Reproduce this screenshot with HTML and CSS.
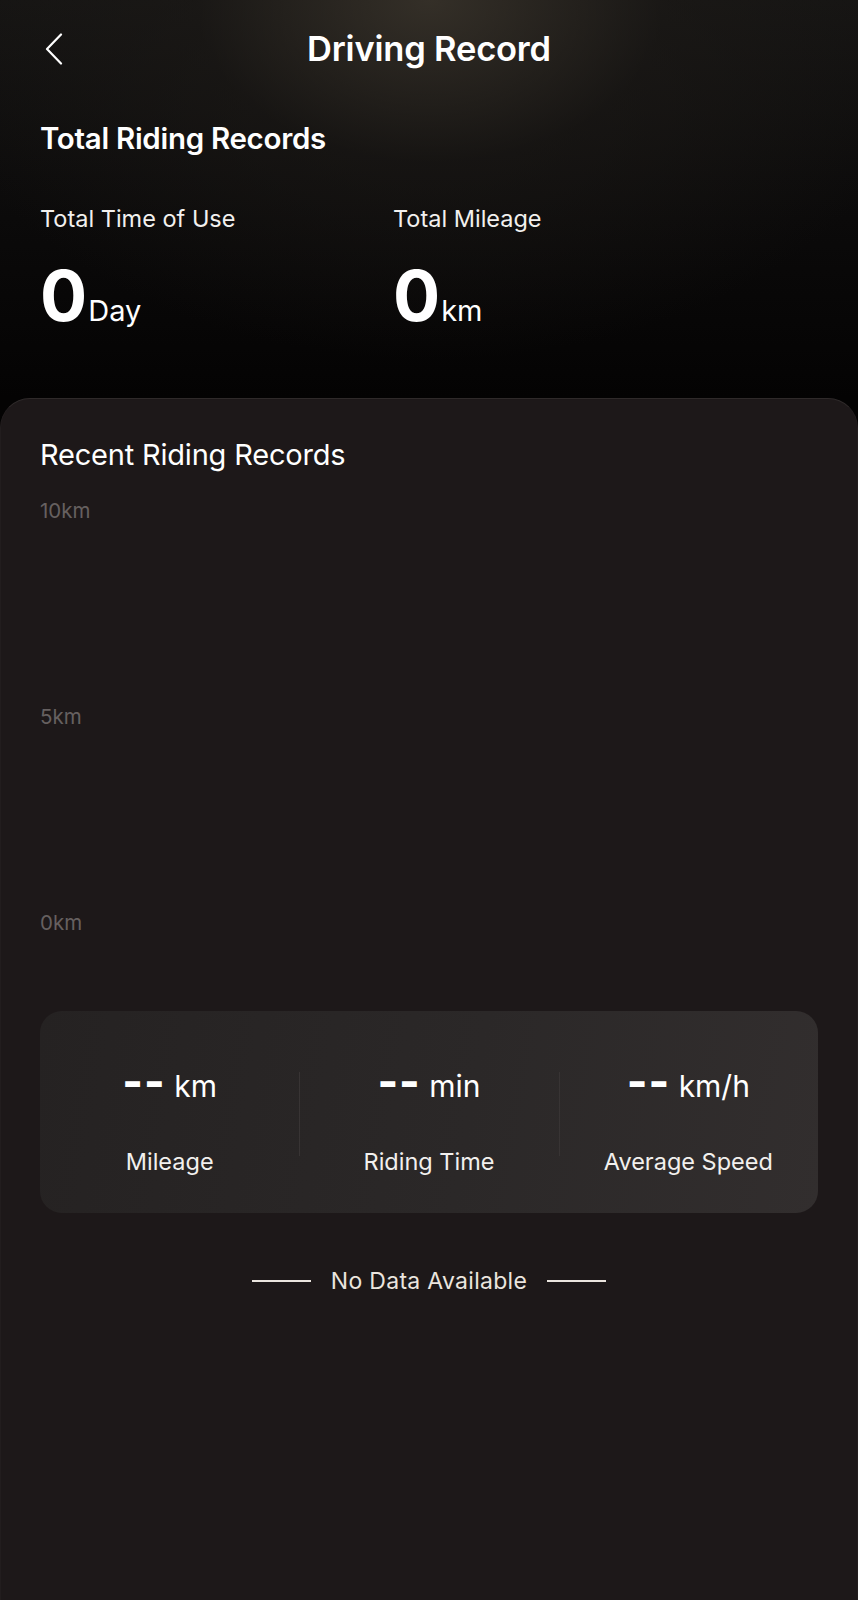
FILE: index.html
```html
<!DOCTYPE html>
<html lang="en">
<head>
    <meta charset="UTF-8">
    <meta name="viewport" content="width=device-width, initial-scale=1.0">
    <title>Driving Record</title>
    <link rel="stylesheet" href="styles.css">
</head>
<body>
    <div class="page">
        <div class="top">
            <div class="nav">
                <span class="back">
                    <svg width="22" height="32" viewBox="0 0 22 32" fill="none">
                        <path d="M18 1.5 L4 16 L18 30.5" stroke="#fff" stroke-width="2.2" stroke-linecap="round" stroke-linejoin="round"/>
                    </svg>
                </span>
                <h1>Driving Record</h1>
            </div>

            <h2 class="total-title">Total Riding Records</h2>

            <div class="totals">
                <div class="total-item">
                    <div class="total-label">Total Time of Use</div>
                    <div class="total-value"><span class="num">0</span><span class="unit">Day</span></div>
                </div>
                <div class="total-item">
                    <div class="total-label">Total Mileage</div>
                    <div class="total-value"><span class="num">0</span><span class="unit">km</span></div>
                </div>
            </div>
        </div>

        <div class="card">
            <h2 class="card-title">Recent Riding Records</h2>

            <div class="chart">
                <div class="axis-label">10km</div>
                <div class="axis-label">5km</div>
                <div class="axis-label">0km</div>
            </div>

            <div class="summary">
                <div class="summary-item">
                    <div class="summary-value"><span class="dash">--</span> km</div>
                    <div class="summary-label">Mileage</div>
                </div>
                <div class="summary-item">
                    <div class="summary-value"><span class="dash">--</span> min</div>
                    <div class="summary-label">Riding Time</div>
                </div>
                <div class="summary-item">
                    <div class="summary-value"><span class="dash">--</span> km/h</div>
                    <div class="summary-label">Average Speed</div>
                </div>
            </div>

            <div class="empty">
                <span class="empty-line"></span>
                <span class="empty-text">No Data Available</span>
                <span class="empty-line"></span>
            </div>
        </div>
    </div>
</body>
</html>
```

FILE: styles.css
```css
html, body {
    margin: 0;
    padding: 0;
    background: #1d1819;
}
body {
    font-family: 'Inter', 'Roboto', sans-serif;
    color: #fff;
}
.page {
    width: 858px;
    min-height: 1600px;
    background: #040303;
}
.top {
    height: 398px;
    box-sizing: border-box;
    padding: 0 40px;
    background:
        radial-gradient(ellipse 520px 360px at 430px 0px, rgba(60, 54, 45, 0.8) 0%, rgba(30, 27, 24, 0.5) 45%, rgba(0, 0, 0, 0) 100%),
        linear-gradient(180deg, #151413 0%, #0b0a0a 55%, #040303 100%);
}
.nav {
    position: relative;
    height: 98px;
    display: flex;
    align-items: center;
    justify-content: center;
}
.back {
    position: absolute;
    left: 3px;
    top: 33px;
    width: 22px;
    height: 32px;
}
.back svg {
    display: block;
}
.nav h1 {
    margin: 0;
    font-size: 34.5px;
    font-weight: 600;
    line-height: 98px;
    letter-spacing: -0.2px;
}
.total-title {
    margin: 25px 0 0 0;
    font-size: 29.5px;
    font-weight: 600;
    line-height: 30px;
    letter-spacing: -0.3px;
}
.totals {
    display: grid;
    grid-template-columns: 353px auto;
    margin-top: 53px;
}
.total-label {
    font-size: 23.5px;
    line-height: 26px;
    color: #f2f0ee;
}
.total-value {
    margin-top: 34px;
    line-height: 60px;
}
.total-value .num {
    font-size: 70px;
    font-weight: 700;
}
.total-value .unit {
    font-size: 29px;
    margin-left: 1px;
}
.card {
    min-height: 1202px;
    box-sizing: border-box;
    padding: 0 39px;
    background: #1d1819;
    border-radius: 30px 30px 0 0;
    border: 1px solid #2f2a2a;
    border-bottom: none;
    border-left-color: #221d1e;
    border-right-color: #221d1e;
}
.card-title {
    margin: 0;
    padding-top: 40px;
    font-size: 29px;
    font-weight: 400;
    line-height: 32px;
    letter-spacing: -0.2px;
}
.chart {
    height: 432px;
    margin-top: 30px;
    display: flex;
    flex-direction: column;
    justify-content: space-between;
}
.axis-label {
    font-size: 20.5px;
    line-height: 20px;
    color: #666060;
}
.summary {
    margin-top: 78px;
    height: 202px;
    border-radius: 22px;
    background: linear-gradient(100deg, #252222 0%, #2b2828 55%, #322e2e 100%);
    display: grid;
    grid-template-columns: 1fr 1fr 1fr;
    align-items: start;
}
.summary-item {
    position: relative;
    padding-top: 53px;
    text-align: center;
}
.summary-item + .summary-item::before {
    content: "";
    position: absolute;
    left: 0;
    top: 61px;
    width: 1px;
    height: 84px;
    background: #383434;
}
.summary-value {
    font-size: 30px;
    line-height: 34px;
    font-weight: 400;
}
.dash {
    font-size: 44px;
    font-weight: 800;
    line-height: 34px;
    letter-spacing: 1px;
    margin-right: 0;
}
.summary-label {
    margin-top: 46px;
    font-size: 23.5px;
    line-height: 26px;
    color: #f2f0ee;
}
.empty {
    margin-top: 53px;
    display: flex;
    align-items: center;
    justify-content: center;
    gap: 20px;
}
.empty-line {
    width: 59px;
    height: 2px;
    background: #ebe5df;
}
.empty-text {
    font-size: 23px;
    line-height: 30px;
    color: #ebe5df;
    letter-spacing: 0.3px;
}
```
